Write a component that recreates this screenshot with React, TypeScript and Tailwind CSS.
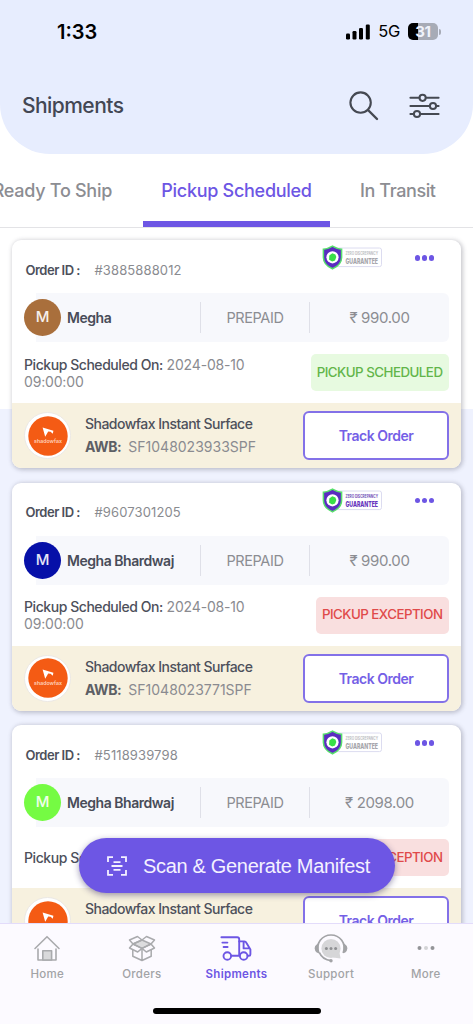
import React from 'react';

type Status = 'SCHEDULED' | 'EXCEPTION';

interface Shipment {
  id: string;
  customer: string;
  avatar: string;
  payment: string;
  amount: string;
  pickupDate?: string;
  status: Status;
  courier: string;
  awb?: string;
  guaranteed: boolean;
}

const shipments: Shipment[] = [
  {
    id: '#3885888012',
    customer: 'Megha',
    avatar: 'bg-[#a96f3c]',
    payment: 'PREPAID',
    amount: '₹ 990.00',
    pickupDate: '2024-08-10 09:00:00',
    status: 'SCHEDULED',
    courier: 'Shadowfax Instant Surface',
    awb: 'SF1048023933SPF',
    guaranteed: false,
  },
  {
    id: '#9607301205',
    customer: 'Megha Bhardwaj',
    avatar: 'bg-[#0610a8]',
    payment: 'PREPAID',
    amount: '₹ 990.00',
    pickupDate: '2024-08-10 09:00:00',
    status: 'EXCEPTION',
    courier: 'Shadowfax Instant Surface',
    awb: 'SF1048023771SPF',
    guaranteed: true,
  },
  {
    id: '#5118939798',
    customer: 'Megha Bhardwaj',
    avatar: 'bg-[#75fb43]',
    payment: 'PREPAID',
    amount: '₹ 2098.00',
    status: 'EXCEPTION',
    courier: 'Shadowfax Instant Surface',
    guaranteed: false,
  },
];

const StatusBar = () => (
  <div className="flex h-[63px] items-center justify-between pl-[57px] pr-[32px]">
    <span className="text-[20px] font-semibold text-black">1:33</span>
    <div className="flex items-center">
      <svg width="24" height="16" viewBox="0 0 24 16">
        <rect x="0" y="9.5" width="4" height="6" rx="1.2" />
        <rect x="6.5" y="7" width="4" height="8.5" rx="1.2" />
        <rect x="13" y="4" width="4" height="11.5" rx="1.2" />
        <rect x="19.8" y="0.5" width="4" height="15" rx="1.2" />
      </svg>
      <span className="ml-[8px] text-[16.5px] tracking-[-0.3px] text-black">5G</span>
      <div className="ml-[8px] flex h-[17px] w-[30px] items-center justify-center rounded-[5px] bg-[linear-gradient(90deg,#000_32%,#a7abb6_32%)] text-[15px] font-bold leading-none tracking-[-0.4px] text-[#f0f3fb]">
        31
      </div>
      <div className="ml-px h-[6px] w-[2px] rounded-r-full bg-[#a7abb6]" />
    </div>
  </div>
);

const Header = () => (
  <header className="h-[154px] rounded-b-[50px] bg-[#e7edfe]">
    <StatusBar />
    <div className="flex h-[86px] items-center pl-[22px] pr-[33px]">
      <h1 className="flex-1 text-[21px] font-medium tracking-[-0.55px] text-[#434754]">Shipments</h1>
      <svg className="mr-px" width="32" height="32" viewBox="0 0 32 32" fill="none" stroke="#454952" strokeWidth="2.1" strokeLinecap="round">
        <circle cx="12.6" cy="12.6" r="10.2" />
        <path d="M20 20l9 9" strokeWidth="2.4" />
      </svg>
      <svg className="ml-[28px]" width="31" height="26" viewBox="0 0 31 26" fill="none" stroke="#454952" strokeWidth="2" strokeLinecap="round">
        <path d="M1.4 4.8h9M17 4.8h12.6M1.4 13h19.4M27.4 13h2.2M1.4 21h3M11.4 21h18.2" />
        <circle cx="13.6" cy="4.8" r="3.1" />
        <circle cx="24" cy="13" r="3.1" />
        <circle cx="8" cy="21" r="3.1" />
      </svg>
    </div>
  </header>
);

const Tabs = () => (
  <nav className="flex h-[74px] border-b border-[#e3e3e6] text-[18px] font-medium tracking-[-0.28px] text-[#8c8d92]">
    <div className="flex w-[143px] justify-end whitespace-nowrap pr-[31px] pt-[23px]">Ready To Ship</div>
    <div className="flex w-[187px] justify-center whitespace-nowrap border-b-[6px] border-[#6d56e4] pt-[23px] text-[#6d56e4]">
      Pickup Scheduled
    </div>
    <div className="flex flex-1 whitespace-nowrap pl-[30px] pt-[23px] tracking-[-0.4px]">In Transit</div>
  </nav>
);

const GuaranteeBadge = ({ active }: { active: boolean }) => (
  <svg width="61" height="26" viewBox="0 0 61 26">
    <rect x="10" y="3" width="49.5" height="18.6" rx="2" fill="#fff" stroke="#dcdcf0" />
    <path d="M10.5 1.2C7.6 3 4.4 4 1.4 4.2v8.2c0 5.4 4 9 9.1 11.4 5.1-2.4 9.1-6 9.1-11.4V4.2c-3-.2-6.2-1.2-9.1-3z" fill="#5b2cc0" stroke="#57df6c" strokeWidth="1.5" />
    <circle cx="10.5" cy="12.3" r="6.1" fill="#fff" />
    <path d="M10.3 8.2l3.1 1.3.9 2.6-1.3 3.3-2.8 1-3.1-1.7.2-4.1z" fill="#39df47" />
    <text x="23.5" y="9.8" fontSize="4.6" fontWeight="700" textLength="32.5" lengthAdjust="spacingAndGlyphs" fill={active ? '#6e4bb5' : '#bdbdc2'}>
      ZERO DISCREPANCY
    </text>
    <text x="23.5" y="18.6" fontSize="8" fontWeight="800" textLength="32.5" lengthAdjust="spacingAndGlyphs" fill={active ? '#6432bc' : '#a5a5aa'}>
      GUARANTEE
    </text>
  </svg>
);

const CourierLogo = () => (
  <div className="flex size-[47px] shrink-0 items-center justify-center rounded-full border border-[#ebe8e4] bg-white">
    <svg width="40" height="40" viewBox="0 0 40 40">
      <circle cx="20" cy="20" r="19.7" fill="#f45b14" />
      <path d="M14.6 11.4l10.8 3.4-.6 3-2.2-2-2.4-.2-3 5.2z" fill="#fff" />
      <text x="6" y="27.4" fontSize="5.4" fontWeight="600" textLength="28" lengthAdjust="spacingAndGlyphs" fill="#ffd2bb">
        shadowfax
      </text>
    </svg>
  </div>
);

const StatusBadge = ({ status }: { status: Status }) => (
  <span
    className={`flex h-[37px] shrink-0 items-center whitespace-nowrap rounded-[5px] pl-[6px] pr-[6.5px] text-[13.3px] font-medium tracking-[-0.5px] ${
      status === 'SCHEDULED' ? 'bg-[#e7fae0] text-[#62b54a]' : 'bg-[#f9dfdf] text-[#e04a4a]'
    }`}
  >
    {status === 'SCHEDULED' ? 'PICKUP SCHEDULED' : 'PICKUP EXCEPTION'}
  </span>
);

const ShipmentCard = ({ shipment }: { shipment: Shipment }) => (
  <article className="h-[228px] shrink-0 overflow-hidden rounded-[9px] bg-white shadow-[1px_1px_4px_1px_rgba(60,60,80,0.28)]">
    <div className="flex h-[53px] items-start pl-[13.5px] pr-[27px] text-[13px]">
      <span className="mt-[20.5px] w-[69px] whitespace-nowrap font-semibold tracking-[-0.5px] text-[#4d505b]">Order ID :</span>
      <span className="mt-[20.5px] flex-1 tracking-[0.12px] text-[#8a8b90]">{shipment.id}</span>
      <div className="mt-[5px] mr-[32px]">
        <GuaranteeBadge active={shipment.guaranteed} />
      </div>
      <div className="mt-[15px] flex gap-[1.5px]">
        <i className="size-[5.5px] rounded-full bg-[#6d56e4]" />
        <i className="size-[5.5px] rounded-full bg-[#6d56e4]" />
        <i className="size-[5.5px] rounded-full bg-[#6d56e4]" />
      </div>
    </div>

    <div className="mx-3 flex h-[49px] items-center rounded-[6px] bg-[linear-gradient(90deg,#fff_12px,#f7f8fc_12px)]">
      <div className={`flex size-[37px] shrink-0 items-center justify-center rounded-full text-[15px] font-medium text-white/90 ${shipment.avatar}`}>
        M
      </div>
      <span className="ml-[6px] w-[133px] whitespace-nowrap text-[14px] font-semibold tracking-[-0.46px] text-[#484c58]">
        {shipment.customer}
      </span>
      <span className="h-[31px] w-[110px] border-x border-[#dfe0e8] text-center text-[14.5px] leading-[31px] tracking-[-0.4px] text-[#8c8d92]">
        {shipment.payment}
      </span>
      <span className="flex-1 pt-[2px] text-center text-[15px] tracking-[-0.36px] text-[#8c8d92]">{shipment.amount}</span>
    </div>

    <div className="mx-3 flex h-[61px] items-center justify-between">
      <p className="w-[235px] text-[14px] leading-[17px] tracking-[-0.17px] text-[#8a8b90]">
        <span className="font-medium tracking-[-0.44px] text-[#4d505b]">Pickup Scheduled On:</span> {shipment.pickupDate}
      </p>
      <StatusBadge status={shipment.status} />
    </div>

    <div className="flex h-[65px] items-center bg-[#f7f1df] px-3">
      <CourierLogo />
      <div className="ml-[14px] flex-1 whitespace-nowrap pb-px text-[14px] leading-[23px] text-[#4d505b]">
        <p className="font-medium tracking-[-0.52px]">{shipment.courier}</p>
        <p>
          <span className="font-bold tracking-[-0.4px] text-[#5d5f65]">AWB:</span>
          <span className="ml-[7px] text-[#8a8b90]">{shipment.awb}</span>
        </p>
      </div>
      <button className="h-[49px] w-[146px] shrink-0 rounded-[6px] border-2 border-[#8371e8] bg-white text-[14px] font-semibold tracking-[-0.5px] text-[#7460e6]">
        Track Order
      </button>
    </div>
  </article>
);

const ScanButton = () => (
  <button className="absolute left-[79px] top-[838px] flex h-[55px] w-[316px] items-center rounded-full bg-[#6d56e4] pl-[28px] font-['Liberation_Sans',Arial,sans-serif] text-[20px] text-[#f4f1ff] shadow-[0_2px_6px_rgba(40,30,90,0.45)]">
    <svg width="20" height="20" viewBox="0 0 20 20" fill="none" stroke="#f4f1ff" strokeWidth="1.8">
      <path d="M1 6V1.2h5M14 1.2h5V6M19 14v4.8h-5M6 18.8H1V14" />
      <path d="M6.5 6.2h7M4.5 10h11M6.5 13.8h7" />
    </svg>
    <span className="ml-[16px] whitespace-nowrap tracking-[-0.32px]">Scan &amp; Generate Manifest</span>
  </button>
);

const HomeIcon = () => (
  <svg width="28" height="28" viewBox="0 0 28 28" fill="none" stroke="#a9aaad" strokeWidth="1.6" strokeLinejoin="round" strokeLinecap="round">
    <path d="M2 14.5L14 2.7l12 11.8M5 15v11h18V15" />
    <path d="M9.8 26v-9.2h8.8V26z" fill="#d9d9db" />
  </svg>
);

const OrdersIcon = () => (
  <svg width="28" height="28" viewBox="0 0 28 28" fill="none" stroke="#a9aaad" strokeWidth="1.5" strokeLinejoin="round">
    <path d="M14 6l9 4-9 4.4L5 10z" fill="#dcdcde" />
    <path d="M14 6L9.5 2.5 1.5 6 5 10l9-4zM14 6l4.5-3.5 8 3.5L23 10M5 10l-3.5 4 8.2 4L14 14.4zM23 10l3.5 4-8.2 4-4.3-3.6z" />
    <path d="M4.8 16v6.3L14 26.5l9.2-4.2V16M14 14.4v12" />
  </svg>
);

const ShipmentsIcon = () => (
  <svg width="32" height="28" viewBox="0 0 32 28" fill="none" stroke="#6d56e4" strokeWidth="1.9" strokeLinecap="round" strokeLinejoin="round">
    <path d="M1.4 3.2h15.8q2 0 2 2v16.6H11.2M2.4 8.6h5M3.6 13h4" />
    <path d="M19.2 7.4h5q1.6 0 2.3 1.6l3.9 6.4v4.8q0 1.6-1.4 1.6h-1.4M23.6 7.6v6.8h6" />
    <circle cx="7.3" cy="22" r="3.8" />
    <circle cx="23.7" cy="22" r="3.8" />
  </svg>
);

const SupportIcon = () => (
  <svg width="34" height="30" viewBox="0 0 34 30" fill="none">
    <circle cx="17" cy="15.5" r="9.6" fill="#d6d6d8" />
    <path d="M19 24.6l7.6 1-1.3-7z" fill="#d6d6d8" />
    <path d="M4.8 20C.9 10 8.5 2 17 2s16 8 12.2 18M5.4 19.6c2 4.6 6 7.4 11.6 8" stroke="#a2a3a6" strokeWidth="1.7" />
    <path d="M4.5 10.5v9.2H3q-2.4-2-2.4-4.4T3 11.2zM29.5 10.5v9.2H31q2.4-2 2.4-4.4T31 11.2z" fill="#a2a3a6" />
    <circle cx="17" cy="27.8" r="1.7" fill="#a2a3a6" />
    <g fill="#8f9093">
      <circle cx="12.4" cy="15.4" r="1.5" />
      <circle cx="17" cy="15.4" r="1.5" />
      <circle cx="21.6" cy="15.4" r="1.5" />
    </g>
  </svg>
);

const MoreIcon = () => (
  <svg width="18" height="6" viewBox="0 0 18 6">
    <circle cx="2.5" cy="3" r="2" fill="#939498" />
    <circle cx="9" cy="3" r="2" fill="#d3d3d6" />
    <circle cx="15.5" cy="3" r="2" fill="#939498" />
  </svg>
);

const navItems = [
  { label: 'Home', icon: <HomeIcon /> },
  { label: 'Orders', icon: <OrdersIcon /> },
  { label: 'Shipments', icon: <ShipmentsIcon />, active: true },
  { label: 'Support', icon: <SupportIcon /> },
  { label: 'More', icon: <MoreIcon /> },
];

const BottomNav = () => (
  <footer className="h-[101px] border-t border-[#e3dcfb] bg-[#fcfaff]">
    <div className="grid grid-cols-5">
      {navItems.map((item) => (
        <div key={item.label} className="flex flex-col items-center pt-[8px]">
          <div className="flex h-[31px] items-center">{item.icon}</div>
          <span
            className={`mt-[3px] text-[11.5px] leading-[16px] tracking-[0.3px] ${
              item.active ? 'font-semibold text-[#6d56e4]' : 'font-medium text-[#a2a3a6]'
            }`}
          >
            {item.label}
          </span>
        </div>
      ))}
    </div>
    <div className="mx-auto mt-[26px] h-[6px] w-[168px] rounded-full bg-black" />
  </footer>
);

const App: React.FC = () => {
  return (
    <div className="relative flex h-[1024px] w-[473px] flex-col overflow-hidden bg-[linear-gradient(#fff_409px,#eff2fe_409px)] font-[Inter,'Noto_Sans',sans-serif]">
      <Header />
      <Tabs />
      <main className="flex min-h-0 flex-1 flex-col gap-[14.6px] overflow-hidden px-3 pt-[12px]">
        {shipments.map((shipment) => (
          <ShipmentCard key={shipment.id} shipment={shipment} />
        ))}
      </main>
      <BottomNav />
      <ScanButton />
    </div>
  );
};

export default App;
